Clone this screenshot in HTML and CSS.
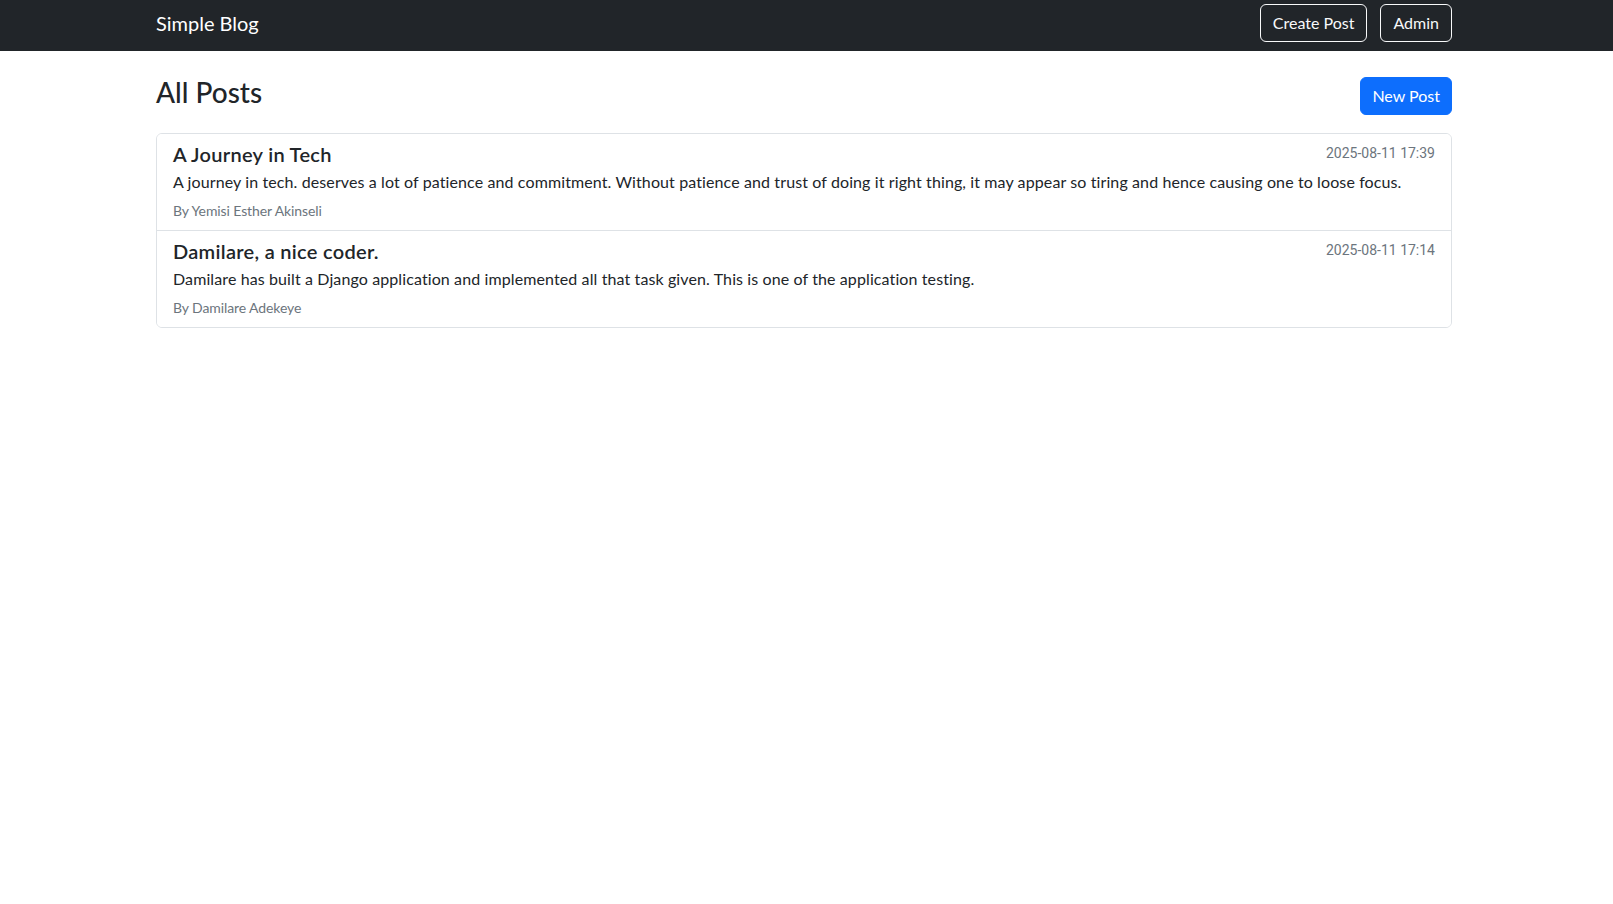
FILE: index.html
```html
<!DOCTYPE html>
<html lang="en">
<head>
<meta charset="utf-8">
<title>Simple Blog</title>
<link rel="stylesheet" href="styles.css">
</head>
<body>
<nav class="navbar">
  <div class="container navbar-inner">
    <a class="navbar-brand" href="#">Simple Blog</a>
    <div class="nav-actions">
      <a class="btn btn-outline-light" href="#">Create Post</a>
      <a class="btn btn-outline-light" href="#">Admin</a>
    </div>
  </div>
</nav>
<main class="container main">
  <div class="page-header">
    <h3 class="page-title">All Posts</h3>
    <a class="btn btn-primary" href="#">New Post</a>
  </div>
  <div class="list-group">
    <a class="list-group-item" href="#">
      <div class="item-head">
        <h5 class="item-title">A Journey in Tech</h5>
        <small class="muted date">2025-08-11 17:39</small>
      </div>
      <p class="item-text">A journey in tech. deserves a lot of patience and commitment. Without patience and trust of doing it right thing, it may appear so tiring and hence causing one to loose focus.</p>
      <small class="muted">By Yemisi Esther Akinseli</small>
    </a>
    <a class="list-group-item" href="#">
      <div class="item-head">
        <h5 class="item-title">Damilare, a nice coder.</h5>
        <small class="muted date">2025-08-11 17:14</small>
      </div>
      <p class="item-text">Damilare has built a Django application and implemented all that task given. This is one of the application testing.</p>
      <small class="muted">By Damilare Adekeye</small>
    </a>
  </div>
</main>
</body>
</html>
```
FILE: styles.css
```css
*, *::before, *::after { box-sizing: border-box; }

body {
  margin: 0;
  font-family: Lato, "Noto Sans", sans-serif;
  font-size: 16px;
  font-weight: 400;
  line-height: 1.5;
  color: #212529;
  background: #fff;
  letter-spacing: 0.11px;
}

a { text-decoration: none; }

.container {
  width: 100%;
  max-width: 1325px;
  margin: 0 auto;
  padding-left: 12px;
  padding-right: 17px;
}

/* Navbar */
.navbar {
  background: #212529;
  height: 51px;
  padding-top: 4px;
}
.navbar-inner {
  display: flex;
  justify-content: space-between;
  align-items: flex-start;
}
.navbar-brand {
  color: #fff;
  font-size: 20px;
  line-height: 30px;
  padding: 4px 0 6px;
  letter-spacing: 0;
  white-space: nowrap;
}
.nav-actions {
  display: flex;
  gap: 13px;
}

/* Buttons */
.btn {
  display: inline-block;
  padding: 6px 12px;
  font-size: 16px;
  line-height: 24px;
  border: 1px solid transparent;
  border-radius: 6px;
  letter-spacing: 0;
  text-align: center;
  white-space: nowrap;
}
.btn-outline-light {
  color: #f8f9fa;
  border-color: #f8f9fa;
}
.btn-primary {
  color: #fff;
  background: #0d6efd;
  border-color: #0d6efd;
  padding: 6px 11px;
}

/* Main */
.main { margin-top: 24px; }

.page-header {
  display: flex;
  justify-content: space-between;
  align-items: center;
  margin-bottom: 16px;
}
.page-title {
  margin: 1px 0 7px;
  font-size: 28px;
  font-weight: 500;
  line-height: 1.2;
  letter-spacing: 0;
}

/* List group */
.list-group {
  display: flex;
  flex-direction: column;
  border: 1px solid #dee2e6;
  border-radius: 6px;
  overflow: hidden;
}
.list-group-item {
  display: block;
  padding: 8px 16px;
  color: #212529;
  background: #fff;
}
.list-group-item + .list-group-item {
  border-top: 1px solid #dee2e6;
}
.item-head {
  display: flex;
  justify-content: space-between;
  width: 100%;
}
.item-title {
  margin: 0 0 4px;
  font-size: 20px;
  font-weight: 600;
  line-height: 1.2;
  letter-spacing: 0.3px;
}
.item-text {
  margin: 0 0 4px;
}
.muted {
  color: #6c757d;
  font-size: 14px;
  letter-spacing: -0.1px;
}
.date {
  font-family: Roboto, Lato, sans-serif;
  letter-spacing: 0;
  line-height: 1.5;
  padding-top: 1px;
}
```
